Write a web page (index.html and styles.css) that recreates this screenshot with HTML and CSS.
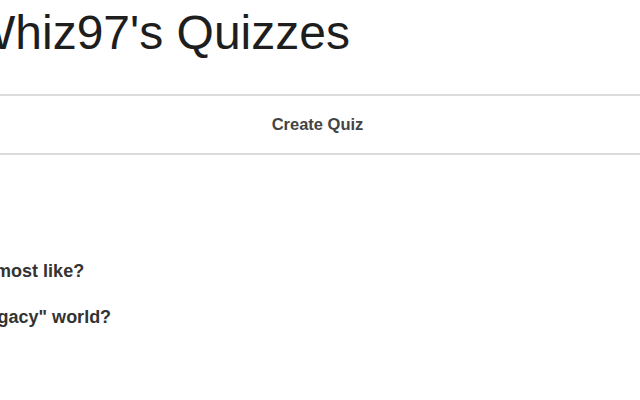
FILE: index.html
```html
<!DOCTYPE html>
<html lang="en">
<head>
<meta charset="utf-8">
<title>Whiz97's Quizzes</title>
<link rel="stylesheet" href="styles.css">
</head>
<body>
<header class="site-header">
  <h1 class="site-title">Whiz97's Quizzes</h1>
</header>
<nav class="main-nav">
  <a class="nav-link" href="#">Create Quiz</a>
</nav>
<main class="quiz-list">
  <ul class="quizzes">
    <li class="quiz-item"><a class="quiz-link" href="#">Which Legacy character are you most like?</a></li>
    <li class="quiz-item"><a class="quiz-link" href="#">How well do you know all the "Legacy" world?</a></li>
  </ul>
</main>
</body>
</html>
```

FILE: styles.css
```css
html, body {
  margin: 0;
  padding: 0;
  background: #fff;
  overflow: hidden;
}
body {
  font-family: "Liberation Sans", Arial, sans-serif;
  color: #222;
}
.site-header {
  padding-top: 5px;
  height: 94px;
  box-sizing: border-box;
}
.site-title {
  margin: 0 0 0 -30px;
  font-size: 48px;
  font-weight: normal;
  line-height: normal;
  color: #1e1e1e;
  white-space: nowrap;
}
.main-nav {
  border-top: 2px solid #dcdcdc;
  border-bottom: 2px solid #dcdcdc;
  height: 57px;
  padding-right: 5px;
  display: flex;
  align-items: center;
  justify-content: center;
}
.nav-link {
  font-size: 16.5px;
  font-weight: bold;
  color: #444;
  text-decoration: none;
}
.quiz-list {
  padding-top: 106px;
}
.quizzes {
  list-style: none;
  margin: 0 0 0 -286px;
  padding: 0;
  display: flex;
  flex-direction: column;
  gap: 25px;
}
.quiz-item {
  white-space: nowrap;
}
.quiz-link {
  font-size: 18px;
  font-weight: bold;
  color: #333;
  text-decoration: none;
}
```
